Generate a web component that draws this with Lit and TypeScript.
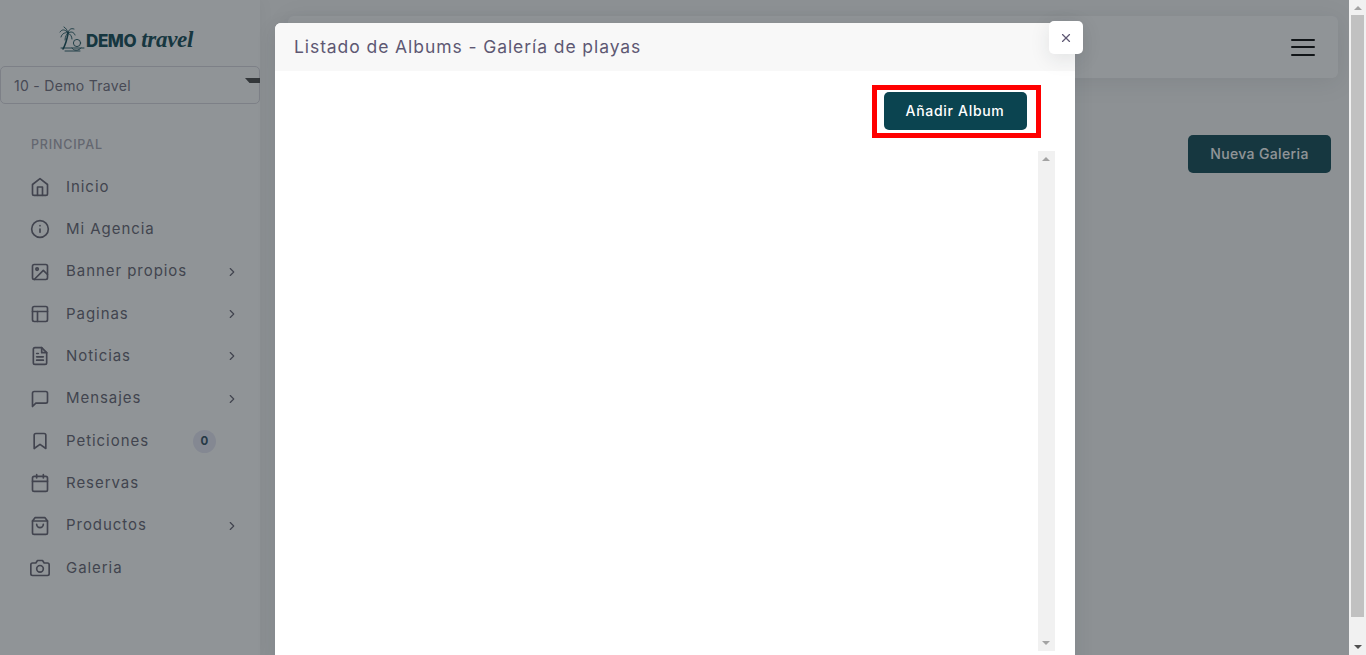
import { LitElement, html, css, svg } from "lit";
import { customElement } from "lit/decorators.js";

const ICONS: Record<string, unknown> = {
  home: svg`<path d="M3 9l9-7 9 7v11a2 2 0 0 1-2 2H5a2 2 0 0 1-2-2z"/><polyline points="9 22 9 12 15 12 15 22"/>`,
  info: svg`<circle cx="12" cy="12" r="10"/><line x1="12" y1="16" x2="12" y2="12"/><line x1="12" y1="8" x2="12.01" y2="8"/>`,
  image: svg`<rect x="3" y="3" width="18" height="18" rx="2" ry="2"/><circle cx="8.5" cy="8.5" r="1.5"/><polyline points="21 15 16 10 5 21"/>`,
  layout: svg`<rect x="3" y="3" width="18" height="18" rx="2" ry="2"/><line x1="3" y1="9" x2="21" y2="9"/><line x1="9" y1="21" x2="9" y2="9"/>`,
  file: svg`<path d="M14 2H6a2 2 0 0 0-2 2v16a2 2 0 0 0 2 2h12a2 2 0 0 0 2-2V8z"/><polyline points="14 2 14 8 20 8"/><line x1="16" y1="13" x2="8" y2="13"/><line x1="16" y1="17" x2="8" y2="17"/><polyline points="10 9 9 9 8 9"/>`,
  message: svg`<path d="M21 15a2 2 0 0 1-2 2H7l-4 4V5a2 2 0 0 1 2-2h14a2 2 0 0 1 2 2z"/>`,
  bookmark: svg`<path d="M19 21l-7-5-7 5V5a2 2 0 0 1 2-2h10a2 2 0 0 1 2 2z"/>`,
  calendar: svg`<rect x="3" y="4" width="18" height="18" rx="2" ry="2"/><line x1="16" y1="2" x2="16" y2="6"/><line x1="8" y1="2" x2="8" y2="6"/><line x1="3" y1="10" x2="21" y2="10"/>`,
  bag: svg`<path d="M6 2L3 6v14a2 2 0 0 0 2 2h14a2 2 0 0 0 2-2V6l-3-4z"/><line x1="3" y1="6" x2="21" y2="6"/><path d="M16 10a4 4 0 0 1-8 0"/>`,
  camera: svg`<path d="M23 19a2 2 0 0 1-2 2H3a2 2 0 0 1-2-2V8a2 2 0 0 1 2-2h4l2-3h6l2 3h4a2 2 0 0 1 2 2z"/><circle cx="12" cy="13" r="4"/>`,
};

interface Item { icon: string; label: string; chevron?: boolean; badge?: string; }

const MENU: Item[] = [
  { icon: "home", label: "Inicio" },
  { icon: "info", label: "Mi Agencia" },
  { icon: "image", label: "Banner propios", chevron: true },
  { icon: "layout", label: "Paginas", chevron: true },
  { icon: "file", label: "Noticias", chevron: true },
  { icon: "message", label: "Mensajes", chevron: true },
  { icon: "bookmark", label: "Peticiones", badge: "0" },
  { icon: "calendar", label: "Reservas" },
  { icon: "bag", label: "Productos", chevron: true },
  { icon: "camera", label: "Galeria" },
];

@customElement("app-root")
export class AppRoot extends LitElement {
  static styles = css`
    :host {
      display: flex;
      width: 1366px;
      height: 655px;
      overflow: hidden;
      font-family: Inter, "Liberation Sans", sans-serif;
      color: #625f6e;
    }
    * { box-sizing: border-box; }
    .app {
      position: relative;
      flex: 1;
      display: flex;
      min-width: 0;
      background: #f8f8f8;
    }
    .sidebar {
      width: 260px;
      flex: none;
      background: #fff;
      box-shadow: 0 0 15px rgba(34, 41, 47, 0.05);
      display: flex;
      flex-direction: column;
    }
    .logo {
      height: 66px;
      padding: 26px 0 0 59px;
      display: flex;
      align-items: flex-start;
    }
    .logo svg { width: 27px; height: 27px; flex: none; }
    .logo-text {
      display: flex;
      align-items: baseline;
      margin-top: 2px;
      color: #0b4450;
      white-space: nowrap;
    }
    .demo { font: 800 17px/24px Inter, sans-serif; letter-spacing: -0.4px; }
    .travel {
      font: italic 700 23px/24px "Liberation Serif", serif;
      margin-left: 5px;
      letter-spacing: -0.3px;
    }
    .select {
      position: relative;
      height: 38px;
      border: 1px solid #d8d6de;
      border-radius: 5px;
      padding: 0 13px;
      display: flex;
      align-items: center;
      font-size: 14px;
      letter-spacing: 0.3px;
      color: #6e6b7b;
    }
    .caret {
      position: absolute;
      right: -1px;
      top: 11px;
      width: 15px;
      height: 5px;
      background: #444;
      clip-path: polygon(0 0, 100% 0, 100% 100%, 30% 100%);
    }
    .section {
      margin: 33px 0 0 31px;
      height: 15px;
      font-size: 12.5px;
      line-height: 15px;
      letter-spacing: 0.8px;
      color: #a6a4b0;
      font-weight: 500;
    }
    .menu { margin: 14px 0 0; display: flex; flex-direction: column; }
    .item {
      height: 42.33px;
      display: flex;
      align-items: center;
      padding-left: 30px;
      font-size: 15px;
      letter-spacing: 0.95px;
    }
    .item > svg.ic {
      width: 20px;
      height: 20px;
      flex: none;
      margin-right: 16px;
      fill: none;
      stroke: currentColor;
      stroke-width: 2;
      stroke-linecap: round;
      stroke-linejoin: round;
    }
    .label { flex: 1; margin-top: -2px; }
    .chev {
      width: 14px;
      height: 14px;
      margin-right: 21px;
      fill: none;
      stroke: currentColor;
      stroke-width: 2;
      stroke-linecap: round;
      stroke-linejoin: round;
    }
    .badge {
      width: 23px;
      height: 23px;
      margin-right: 44px;
      border-radius: 50%;
      background: #e6e7f5;
      color: #2c4a5c;
      font-size: 11.5px;
      font-weight: 700;
      letter-spacing: 0;
      display: flex;
      align-items: center;
      justify-content: center;
    }
    .main {
      flex: 1;
      min-width: 0;
      display: flex;
      flex-direction: column;
      align-items: flex-end;
      padding: 16px 11px 0 0;
    }
    .navbar {
      width: 1050px;
      height: 62px;
      background: #fff;
      border-radius: 6px;
      padding-right: 23px;
      display: flex;
      align-items: center;
      justify-content: flex-end;
      box-shadow: 0 4px 24px rgba(34, 41, 47, 0.1);
    }
    .burger { width: 24px; display: flex; flex-direction: column; gap: 5.5px; }
    .burger i { display: block; height: 2px; background: #000; border-radius: 1px; }
    .btn {
      height: 38px;
      width: 143px;
      border: 0;
      border-radius: 5px;
      background: #0b4450;
      color: #fff;
      font: 500 14px/38px Inter, sans-serif;
      letter-spacing: 0.7px;
      text-align: center;
      padding: 0;
    }
    .new { margin: 57px 7px 0 0; letter-spacing: 0.35px; }
    .backdrop {
      position: absolute;
      inset: 0;
      background: rgba(34, 41, 47, 0.5);
      display: flex;
      justify-content: center;
      align-items: flex-start;
    }
    .modal {
      position: relative;
      width: 800px;
      height: 650px;
      margin-top: 23px;
      background: #fff;
      border-radius: 6px 6px 0 0;
      display: flex;
      flex-direction: column;
      box-shadow: 0 5px 20px rgba(34, 41, 47, 0.1);
    }
    .modal-head {
      height: 48px;
      flex: none;
      background: #f8f8f8;
      border-radius: 6px 6px 0 0;
      padding: 0 19px 2px 19.5px;
      display: flex;
      align-items: center;
      font-size: 17.5px;
      letter-spacing: 0.92px;
      color: #5e5873;
    }
    .close {
      position: absolute;
      top: -2px;
      right: -8px;
      width: 34px;
      height: 33px;
      background: #fff;
      border-radius: 5px;
      box-shadow: 0 5px 20px rgba(34, 41, 47, 0.1);
      display: flex;
      align-items: center;
      justify-content: center;
      color: #5e5873;
    }
    .close svg {
      width: 14px;
      height: 14px;
      fill: none;
      stroke: currentColor;
      stroke-width: 2;
      stroke-linecap: round;
    }
    .modal-body {
      flex: 1;
      display: flex;
      flex-direction: column;
      align-items: flex-end;
      padding: 14px 20px 0 0;
    }
    .mark {
      border: 5px solid #f00;
      padding: 2px 9px 3px 7px;
      margin-right: 14px;
    }
    .inner-scroll {
      width: 17px;
      height: 500px;
      margin-top: 13px;
      background: #f1f1f1;
    }
    .track {
      display: flex;
      flex-direction: column;
      align-items: center;
      justify-content: space-between;
    }
    .arrow { width: 0; height: 0; border-left: 4px solid transparent; border-right: 4px solid transparent; }
    .arrow.up { border-bottom: 4px solid #a3a3a3; margin-top: 6px; }
    .arrow.down { border-top: 4px solid #a3a3a3; margin-bottom: 6px; }
    .arrow.dark { border-top-color: #505050; }
    .page-scroll {
      width: 17px;
      flex: none;
      background: #f1f1f1;
      position: relative;
    }
    .thumb {
      position: absolute;
      top: 15px;
      left: 2px;
      right: 2px;
      height: 602px;
      background: #c1c1c1;
    }
  `;

  private item(i: Item) {
    return html`<div class="item">
      <svg class="ic" viewBox="0 0 24 24">${ICONS[i.icon]}</svg>
      <span class="label">${i.label}</span>
      ${i.chevron
        ? html`<svg class="chev" viewBox="0 0 24 24"><polyline points="9 18 15 12 9 6" /></svg>`
        : ""}
      ${i.badge ? html`<span class="badge">${i.badge}</span>` : ""}
    </div>`;
  }

  render() {
    return html`
      <div class="app">
        <aside class="sidebar">
          <div class="logo">
            <svg viewBox="0 0 27 27" fill="none" stroke="#0b4450" stroke-width="0.9" stroke-linecap="round">
              <path d="M9 8C8 13 7 18 4 23" stroke-width="1.5" />
              <path d="M9 7C6 3 3 3 1 6M9 7C7 6 3 7 2 11M9 7C8 8 6 10 6 14M9 7C10 3 12 2 15 3M9 7C12 5 15 6 16 9M9 7C11 8 13 10 13 13M9 7C8 4 7 2 5 1" />
              <circle cx="18" cy="17" r="3.6" />
              <path d="M2 22H25M6 25H21" />
              <path d="M13 22C14 25 20 25 22 22" />
            </svg>
            <div class="logo-text"><span class="demo">DEMO</span><span class="travel">travel</span></div>
          </div>
          <div class="select">10 - Demo Travel<span class="caret"></span></div>
          <div class="section">PRINCIPAL</div>
          <nav class="menu">${MENU.map((m) => this.item(m))}</nav>
        </aside>
        <main class="main">
          <div class="navbar">
            <div class="burger"><i></i><i></i><i></i></div>
          </div>
          <button class="btn new">Nueva Galeria</button>
        </main>
        <div class="backdrop">
          <section class="modal">
            <header class="modal-head">Listado de Albums - Galería de playas</header>
            <div class="close">
              <svg viewBox="0 0 24 24"><line x1="18" y1="6" x2="6" y2="18" /><line x1="6" y1="6" x2="18" y2="18" /></svg>
            </div>
            <div class="modal-body">
              <div class="mark"><button class="btn">Añadir Album</button></div>
              <div class="inner-scroll track"><span class="arrow up"></span><span class="arrow down"></span></div>
            </div>
          </section>
        </div>
      </div>
      <div class="page-scroll track">
        <span class="arrow up"></span>
        <span class="thumb"></span>
        <span class="arrow down dark"></span>
      </div>
    `;
  }
}
